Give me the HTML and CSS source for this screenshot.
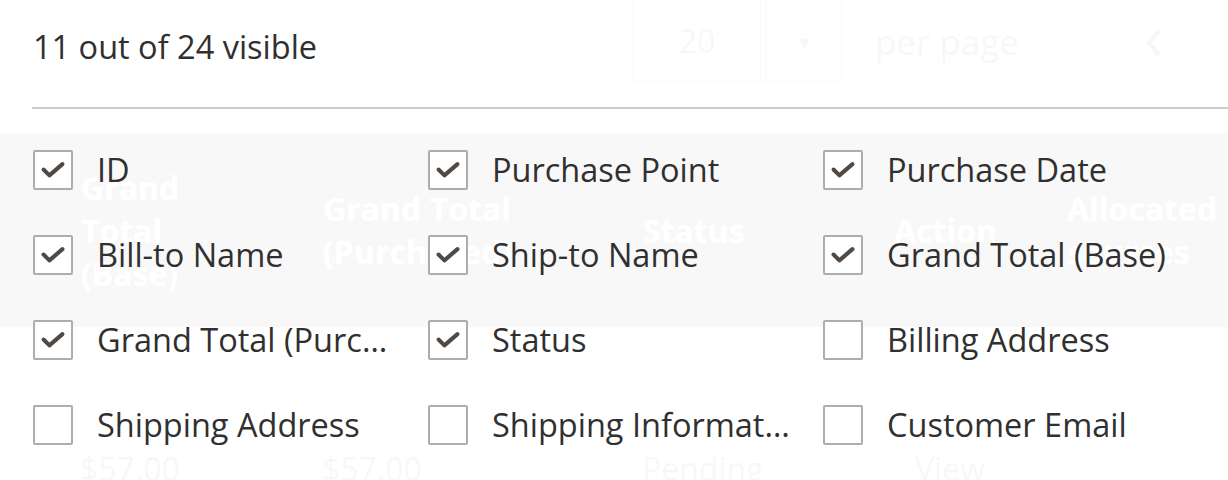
FILE: index.html
```html
<!DOCTYPE html>
<html lang="en">
<head>
  <meta charset="UTF-8" />
  <title>Columns</title>
  <link rel="stylesheet" href="styles.css">
</head>
<body>
  <div class="page">
    <div class="toolbar">
      <div class="pager-size">
        <span class="size-value">20</span>
        <span class="size-toggle">&#9662;</span>
      </div>
      <span class="per-page">per page</span>
      <span class="pager-prev">&lsaquo;</span>
    </div>

    <div class="grid">
      <div class="grid-head">
        <div class="cell cell-select"></div>
        <div class="cell col-base">Grand Total (Base)</div>
        <div class="cell col-purchased">Grand Total (Purchased)</div>
        <div class="cell col-status">Status</div>
        <div class="cell col-action">Action</div>
        <div class="cell col-sources">Allocated sources</div>
      </div>
      <div class="grid-row">
        <div class="cell cell-select"></div>
        <div class="cell col-base">$57.00</div>
        <div class="cell col-purchased">$57.00</div>
        <div class="cell col-status">Pending</div>
        <div class="cell col-action link">View</div>
        <div class="cell col-sources"></div>
      </div>
    </div>
  </div>

  <div class="columns-panel">
    <div class="panel-header">11 out of 24 visible</div>
    <ul class="column-list">
      <li class="column-item checked"><span class="box"><svg viewBox="0 0 40 40"><path d="M9.5 19.5 L16 26 L30.5 13.5"/></svg></span><span class="label">ID</span></li>
      <li class="column-item checked"><span class="box"><svg viewBox="0 0 40 40"><path d="M9.5 19.5 L16 26 L30.5 13.5"/></svg></span><span class="label">Purchase Point</span></li>
      <li class="column-item checked"><span class="box"><svg viewBox="0 0 40 40"><path d="M9.5 19.5 L16 26 L30.5 13.5"/></svg></span><span class="label">Purchase Date</span></li>
      <li class="column-item checked"><span class="box"><svg viewBox="0 0 40 40"><path d="M9.5 19.5 L16 26 L30.5 13.5"/></svg></span><span class="label">Bill-to Name</span></li>
      <li class="column-item checked"><span class="box"><svg viewBox="0 0 40 40"><path d="M9.5 19.5 L16 26 L30.5 13.5"/></svg></span><span class="label">Ship-to Name</span></li>
      <li class="column-item checked"><span class="box"><svg viewBox="0 0 40 40"><path d="M9.5 19.5 L16 26 L30.5 13.5"/></svg></span><span class="label">Grand Total (Base)</span></li>
      <li class="column-item checked"><span class="box"><svg viewBox="0 0 40 40"><path d="M9.5 19.5 L16 26 L30.5 13.5"/></svg></span><span class="label">Grand Total (Purchased)</span></li>
      <li class="column-item checked"><span class="box"><svg viewBox="0 0 40 40"><path d="M9.5 19.5 L16 26 L30.5 13.5"/></svg></span><span class="label">Status</span></li>
      <li class="column-item"><span class="box"></span><span class="label">Billing Address</span></li>
      <li class="column-item"><span class="box"></span><span class="label">Shipping Address</span></li>
      <li class="column-item"><span class="box"></span><span class="label">Shipping Information</span></li>
      <li class="column-item"><span class="box"></span><span class="label">Customer Email</span></li>
    </ul>
  </div>
</body>
</html>
```

FILE: styles.css
```css
body {
  font-family: "Open Sans", "Liberation Sans", sans-serif;
  background-color: white;
  color: #303030;
  margin: 0;
  padding: 0;
  width: 1228px;
  height: 480px;
  overflow: hidden;
  position: relative;
}

/* page that sits under the dropdown */
.toolbar {
  height: 133px;
  display: flex;
  align-items: flex-start;
  padding-left: 632px;
  box-sizing: border-box;
}
.pager-size {
  display: flex;
  height: 85px;
  margin-top: -2px;
}
.size-value {
  width: 130px;
  border: 2px solid #adadad;
  box-sizing: border-box;
  display: flex;
  align-items: center;
  justify-content: center;
  font-size: 32px;
}
.size-toggle {
  width: 78px;
  margin-left: 3px;
  border: 2px solid #adadad;
  box-sizing: border-box;
  display: flex;
  align-items: center;
  justify-content: center;
  font-size: 22px;
}
.per-page {
  margin: 18px 0 0 32px;
  font-size: 35px;
}
.pager-prev {
  margin: 4px 0 0 125px;
  font-size: 64px;
  line-height: 1;
}
.grid-head, .grid-row {
  display: flex;
}
.grid-head {
  height: 194px;
  background-color: #514943;
  color: white;
  font-weight: bold;
  font-size: 32px;
  line-height: 43px;
  align-items: center;
}
.grid-head .cell {
  height: 100%;
  display: flex;
  align-items: center;
  border-left: 1px solid #6f6661;
}
.grid-head .cell:first-child {
  border-left: none;
}
.cell {
  padding: 0 28px 0 30px;
  box-sizing: border-box;
  flex: none;
}
.cell-select { width: 50px; padding: 0; }
.col-base { width: 242px; }
.col-purchased { width: 320px; }
.col-status { width: 251px; }
.col-action { width: 173px; }
.col-sources { width: 192px; }
.grid-row {
  font-size: 32px;
  padding-top: 120px;
}
.grid-row .link {
  padding-left: 52px;
}

/* columns dropdown */
.columns-panel {
  position: absolute;
  top: 0;
  left: 0;
  width: 1300px;
  height: 480px;
  background-color: rgba(255, 255, 255, 0.965);
  padding: 22px 0 0 32px;
  box-sizing: border-box;
}
.panel-header {
  font-size: 32.5px;
  line-height: 49px;
  padding: 0 0 36px 1px;
  border-bottom: 2px solid #cccccc;
}
.column-list {
  list-style: none;
  margin: 18px 0 0 0;
  padding: 0 0 0 1px;
  display: grid;
  grid-template-columns: repeat(3, 395px);
  grid-auto-rows: 85px;
}
.column-item {
  display: flex;
  align-items: center;
}
.box {
  width: 40px;
  height: 40px;
  border: 2px solid #adadad;
  border-radius: 2px;
  box-sizing: border-box;
  flex: none;
  background-color: white;
}
.box svg {
  display: block;
  width: 36px;
  height: 36px;
  margin: 0;
}
.box path {
  fill: none;
  stroke: #514943;
  stroke-width: 4.5;
  stroke-linecap: round;
  stroke-linejoin: round;
}
.label {
  margin-left: 24px;
  font-size: 32.5px;
  white-space: nowrap;
  overflow: hidden;
  text-overflow: ellipsis;
  max-width: 300px;
}
```
